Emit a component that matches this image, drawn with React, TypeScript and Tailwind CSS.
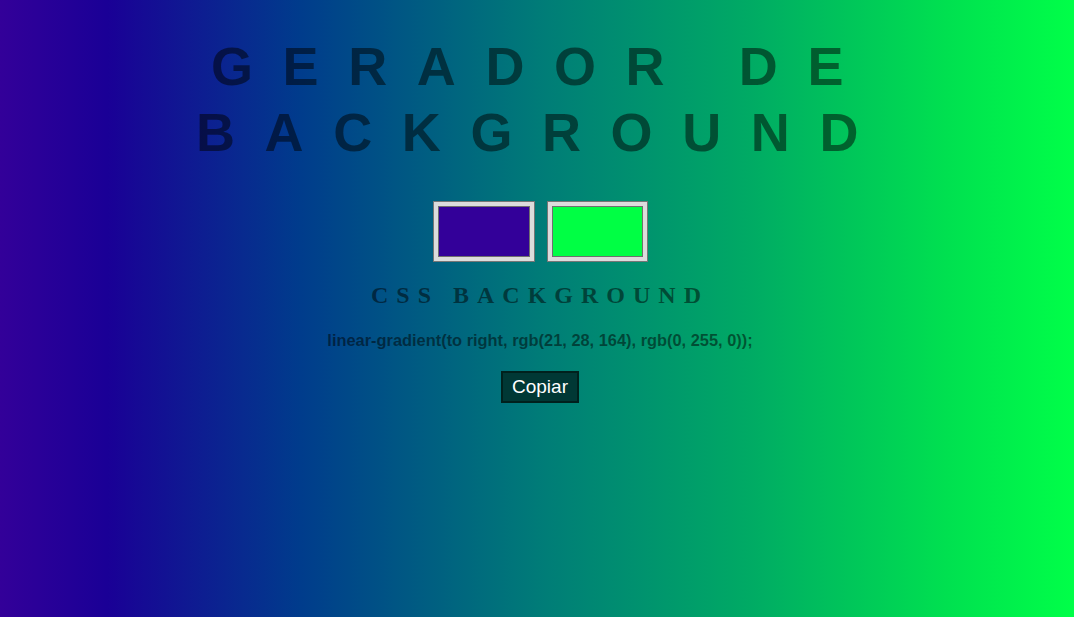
import React, { useState } from 'react';

export default function App() {
  const [c1] = useState('#330099');
  const [c2] = useState('#00ff44');

  return (
    <div className="min-h-screen w-full pl-[6px] text-center bg-[linear-gradient(to_right,#330099_0%,#1a0096_10%,#003c8c_28%,#007b78_50%,#00ab64_70%,#00e050_88%,#00ff48_100%)]">
      <h1 className="pt-[33px] pl-[4px] font-['Liberation_Sans',Arial,sans-serif] text-[54px] leading-[66px] font-bold tracking-[29.6px] text-black/50">
        GERADOR DE BACKGROUND
      </h1>

      <div className="mt-[36px] flex justify-center gap-3">
        <div className="w-[102px] h-[61px] border border-[#767676] bg-[#dcdcdc] p-1">
          <div className="w-full h-full border border-[#6f6f6f]" style={{ backgroundColor: c1 }}></div>
        </div>
        <div className="w-[101px] h-[61px] border border-[#767676] bg-[#dcdcdc] p-1">
          <div className="w-full h-full border border-[#6f6f6f]" style={{ backgroundColor: c2 }}></div>
        </div>
      </div>

      <h2 className="mt-[19px] font-['Liberation_Serif','Times_New_Roman',serif] text-[24px] leading-[28px] font-bold tracking-[8px] text-black/50">
        CSS BACKGROUND
      </h2>

      <p className="mt-[21px] font-['Liberation_Sans',Arial,sans-serif] text-[16.4px] leading-[20px] font-bold text-black/50">
        linear-gradient(to right, rgb(21, 28, 164), rgb(0, 255, 0));
      </p>

      <button className="mt-[21px] border-2 border-[#00211d] bg-[#003835] px-[9px] py-[2px] font-['Liberation_Sans',Arial,sans-serif] text-[19px] leading-[24px] text-white">
        Copiar
      </button>
    </div>
  );
}
